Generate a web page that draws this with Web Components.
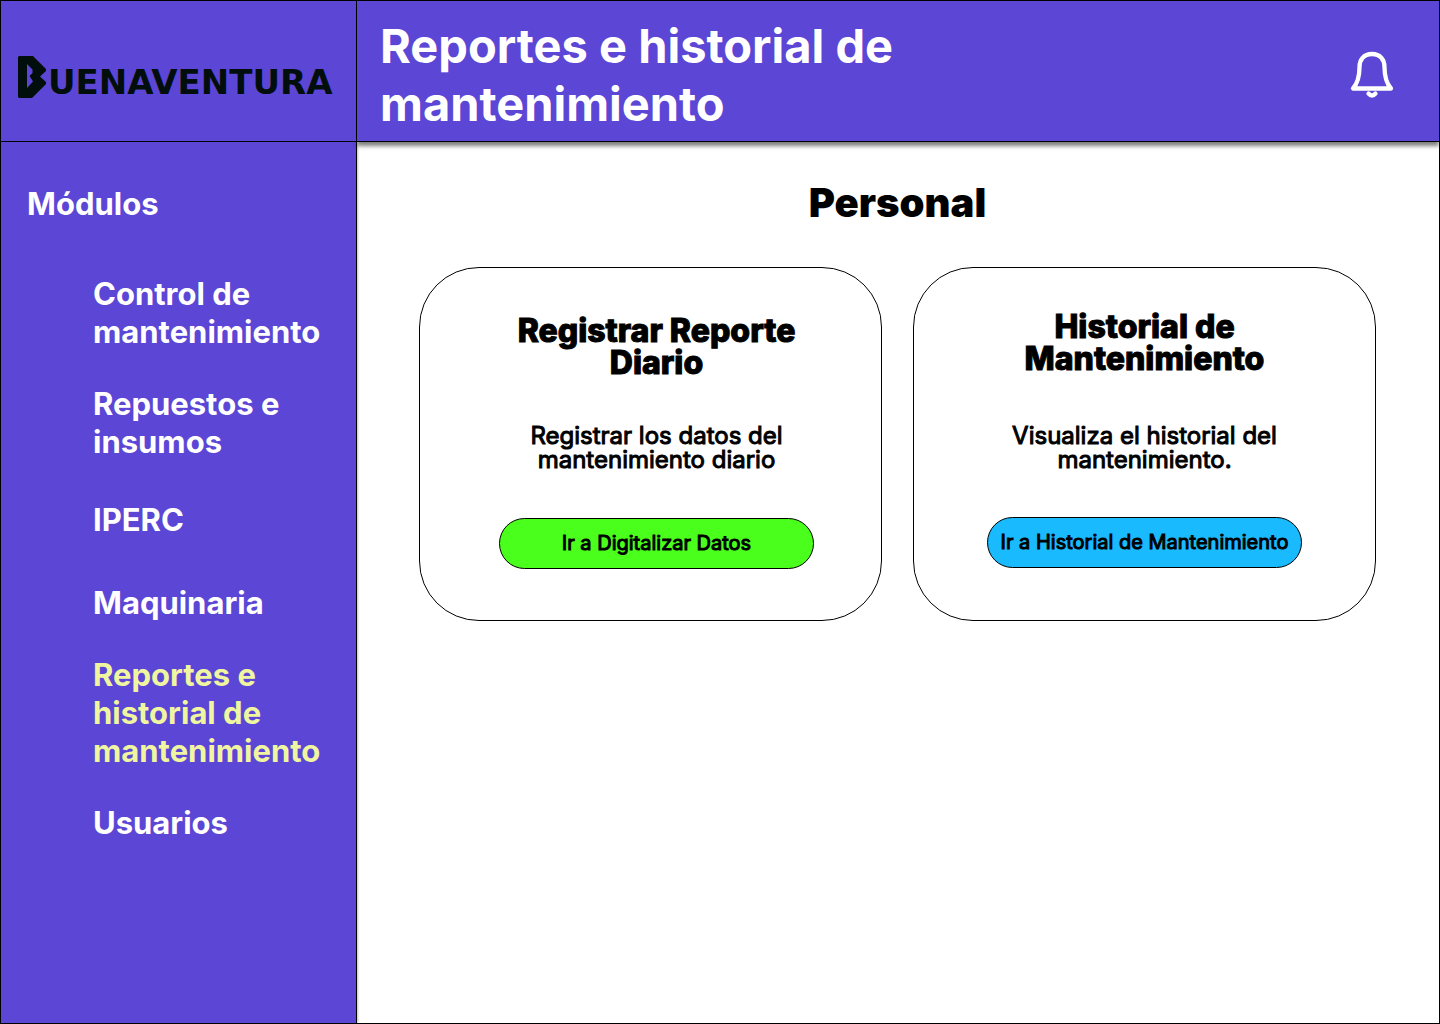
<!DOCTYPE html>
<html lang="es">
<head>
<meta charset="utf-8">
<meta name="viewport" content="width=device-width, initial-scale=1">
<title>Reportes e historial de mantenimiento</title>
<style>
  html, body { margin: 0; }
  body { font-family: Inter, "Liberation Sans", sans-serif; background: #fff; color: #000; }
</style>
</head>
<body>
<app-shell>
  <brand-logo slot="brand"></brand-logo>
  <page-header slot="header">Reportes e historial de mantenimiento</page-header>
  <module-nav slot="nav">
    <module-link>Control de mantenimiento</module-link>
    <module-link>Repuestos e insumos</module-link>
    <module-link spaced>IPERC</module-link>
    <module-link>Maquinaria</module-link>
    <module-link current>Reportes e historial de mantenimiento</module-link>
    <module-link>Usuarios</module-link>
  </module-nav>
  <card-section heading="Personal">
    <action-card tone="green">
      <span slot="title">Registrar Reporte Diario</span>
      <span slot="text">Registrar los datos del mantenimiento diario</span>
      <span slot="action">Ir a Digitalizar Datos</span>
    </action-card>
    <action-card tone="blue">
      <span slot="title">Historial de Mantenimiento</span>
      <span slot="text">Visualiza el historial del mantenimiento.</span>
      <span slot="action">Ir a Historial de Mantenimiento</span>
    </action-card>
  </card-section>
</app-shell>
<script>
const define = (name, html, setup) => {
  const template = document.createElement('template');
  template.innerHTML = html;
  customElements.define(name, class extends HTMLElement {
    constructor() {
      super();
      this.attachShadow({ mode: 'open' }).append(template.content.cloneNode(true));
    }
    connectedCallback() { if (setup) setup(this, this.shadowRoot); }
  });
};

define('app-shell', `
  <style>
    :host { display: grid; box-sizing: border-box; min-height: 100vh; border: 1px solid #000;
      grid-template: auto 1fr / 356px 1fr; }
    .brand, .nav, .head { background: #5c46d6; }
    .brand { display: flex; align-items: center; border-right: 1px solid #000; border-bottom: 1px solid #000; z-index: 2; }
    .nav { border-right: 1px solid #000; box-shadow: 1px 0 2px rgba(0,0,0,.25); }
    .head { border-bottom: 1px solid #000; box-shadow: 0 4px 4px rgba(0,0,0,.5); z-index: 1; }
  </style>
  <div class="brand"><slot name="brand"></slot></div>
  <header class="head"><slot name="header"></slot></header>
  <aside class="nav"><slot name="nav"></slot></aside>
  <main><slot></slot></main>`);

define('brand-logo', `
  <style>
    :host { display: flex; align-items: flex-end; padding: 12px 0 0 17px; color: #020e0c; gap: 2px; }
    svg { display: block; flex: none; }
    span { font: bold 34px/32px "DejaVu Sans", sans-serif; }
  </style>
  <svg width="28" height="42" viewBox="0 0 28 42" aria-hidden="true">
    <path fill="currentColor" fill-rule="evenodd" d="M1 0H15L28 13V15L22 20.500L28 26V28L14 42H1L0 41V1ZM9 8V32L15 25.500L11.500 20L14.500 17V13.500Z"/>
  </svg>
  <span>UENAVENTURA</span>`);

define('page-header', `
  <style>
    :host { display: flex; align-items: center; justify-content: space-between; padding: 16px 44px 8px 23px; color: #fff; }
    h1 { margin: 0; max-width: 600px; font-size: 47px; line-height: 58px; font-weight: 700; }
    button { display: block; padding: 0; border: 0; background: none; color: inherit; cursor: pointer; }
    svg { display: block; }
  </style>
  <h1><slot></slot></h1>
  <button type="button" aria-label="Notificaciones">
    <svg width="46" height="50" viewBox="0 0 46 50" fill="none" stroke="currentColor" stroke-width="4.300" stroke-linecap="round" stroke-linejoin="round">
      <path d="M23 4C14.500 4 10.500 10 10.500 17C10.500 28 8 34 4 38.500H42C38 34 35.500 28 35.500 17C35.500 10 31.500 4 23 4Z"/>
      <path d="M19.500 43.500Q23 47.500 26.500 43.500"/>
    </svg>
  </button>`);

define('module-nav', `
  <style>
    :host { display: block; padding: 43px 20px 40px 26px; color: #fff; }
    h2 { margin: 0 0 52px; font-size: 31px; line-height: 38px; font-weight: 700; }
    nav { display: flex; flex-direction: column; gap: 34px; padding-left: 66px; }
  </style>
  <h2>Módulos</h2>
  <nav aria-label="Módulos"><slot></slot></nav>`);

define('module-link', `
  <style>
    :host { display: block; font-size: 31px; line-height: 38px; font-weight: 700; }
    :host([spaced]) { padding: 6px 0 11px; }
    a { display: block; color: #fff; text-decoration: none; }
    :host([current]) a { color: #f0f6a0; }
  </style>
  <a href="#"><slot></slot></a>`, (el, root) => {
  if (el.hasAttribute('current')) root.querySelector('a').setAttribute('aria-current', 'page');
});

define('card-section', `
  <style>
    :host { display: block; padding: 37px 63px 40px 62px; }
    h2 { margin: 0 0 40px; text-align: center; font-size: 40px; line-height: 48px; font-weight: 900; }
    .cards { display: grid; grid-template-columns: 1fr 1fr; gap: 31px; }
  </style>
  <h2></h2>
  <div class="cards"><slot></slot></div>`, (el, root) => {
  root.querySelector('h2').textContent = el.getAttribute('heading');
});

define('action-card', `
  <style>
    :host { display: flex; flex-direction: column; align-items: center; box-sizing: border-box;
      border: 1px solid #000; border-radius: 60px; text-align: center; }
    :host([tone=green]) { --fill: #4aff1c; --gap: 45px; --lead: 46px; padding: 47px 0 51px 12px; }
    :host([tone=blue]) { --fill: #1abaff; --gap: 49px; --lead: 45px; padding: 43px 0 52px; }
    h3, p { margin: 0; -webkit-text-stroke: 1px #000; }
    h3 { max-width: 320px; font-size: 32px; line-height: 32px; font-weight: 800; margin-bottom: var(--gap); }
    p { max-width: 300px; font-size: 24px; line-height: 24px; margin-bottom: var(--lead); }
    button { width: 315px; height: 51px; padding: 0 0 1px; border: 1px solid #000; border-radius: 26px;
      background: var(--fill); color: #000; font: 20px/20px Inter, "Liberation Sans", sans-serif;
      -webkit-text-stroke: 1px #000; white-space: nowrap; cursor: pointer; }
  </style>
  <h3><slot name="title"></slot></h3>
  <p><slot name="text"></slot></p>
  <button type="button"><slot name="action"></slot></button>`);
</script>
</body>
</html>
